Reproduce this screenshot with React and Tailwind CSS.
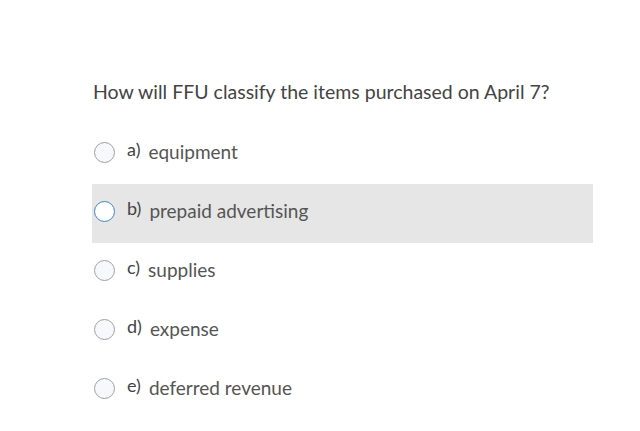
import React from 'react'

const options = [
  { letter: 'a)', text: 'equipment' },
  { letter: 'b)', text: 'prepaid advertising', hover: true },
  { letter: 'c)', text: 'supplies' },
  { letter: 'd)', text: 'expense' },
  { letter: 'e)', text: 'deferred revenue' },
]

export default function App() {
  return (
    <div className="w-[640px] h-[431px] bg-white" style={{ fontFamily: 'Lato, "Open Sans", sans-serif' }}>
      <div className="pt-[80px] pl-[92px] w-[593px]">
        <p className="ml-[1px] text-[19.5px] leading-[24px] text-[#444]">How will FFU classify the items purchased on April 7?</p>
        <div className="mt-[21px]">
          {options.map(o => (
            <div
              key={o.letter}
              className={`h-[59px] flex items-start pl-[2px] pt-[17px] ${o.hover ? 'bg-[#e6e6e6]' : ''}`}
            >
              <span
                className={`w-[21px] h-[21px] rounded-full border-[1.5px] shrink-0 ${o.hover ? 'border-[#3a87c8] bg-white' : 'border-[#a0a0a0] bg-[#f7f8fb]'}`}
              />
              <span className="ml-[12px] -mt-[3px] text-[18px] leading-[20px] text-[#444]">{o.letter}</span>
              <span className="ml-[8px] text-[19px] leading-[20px] text-[#555]">{o.text}</span>
            </div>
          ))}
        </div>
      </div>
    </div>
  )
}
